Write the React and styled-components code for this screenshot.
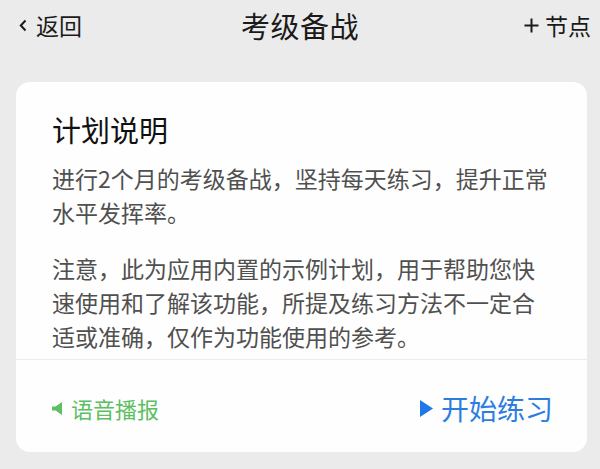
import styled, { createGlobalStyle } from "styled-components";

const GlobalStyle = createGlobalStyle`
    html, body {
        margin: 0;
        padding: 0;
        background-color: #ebebeb;
        font-family: "Noto Sans CJK SC", "Noto Sans", sans-serif;
    }
`;

const Page = styled.div`
    width: 600px;
    height: 469px;
    background-color: #ebebeb;
    overflow: hidden;
`;

const Header = styled.div`
    height: 50px;
    display: grid;
    grid-template-columns: 1fr auto 1fr;
    align-items: center;
    padding: 0 9px;
    color: #1a1a1a;
`;

const BackButton = styled.div`
    display: flex;
    align-items: center;
    gap: 9px;
    padding-left: 10px;
    font-size: 23px;
    line-height: 1;
`;

const Title = styled.div`
    font-size: 29px;
    line-height: 1;
    letter-spacing: 0.5px;
`;

const AddButton = styled.div`
    justify-self: end;
    display: flex;
    align-items: center;
    gap: 6px;
    font-size: 23px;
    line-height: 1;
`;

const Card = styled.div`
    margin: 32px 13px 0 16px;
    background-color: #fefefe;
    border-radius: 14px;
    overflow: hidden;
`;

const CardBody = styled.div`
    padding: 29px 36px 6px 36px;
`;

const CardTitle = styled.h2`
    margin: 0 0 14px;
    font-size: 29px;
    line-height: 36px;
    font-weight: 400;
    color: #111;
`;

const Paragraph = styled.p`
    margin: 0 0 ${(p) => p.gap}px;
    font-size: 23px;
    line-height: 34px;
    color: #505050;
`;

const Footer = styled.div`
    height: 88px;
    border-top: 1px solid #ececec;
    display: flex;
    align-items: center;
    justify-content: space-between;
    padding: 4px 34px 0 36px;
`;

const Action = styled.div`
    display: flex;
    align-items: center;
    gap: ${(p) => p.gap}px;
    color: ${(p) => p.color};
    font-size: ${(p) => p.size}px;
    line-height: 1;
`;

function App() {
    return (
        <Page>
            <GlobalStyle />
            <Header>
                <BackButton>
                    <svg width="8" height="13" viewBox="0 0 8 13">
                        <path
                            d="M6.5 1.5 L1.8 6.5 L6.5 11.5"
                            fill="none"
                            stroke="#1a1a1a"
                            strokeWidth="2"
                        />
                    </svg>
                    返回
                </BackButton>
                <Title>考级备战</Title>
                <AddButton>
                    <svg width="15" height="15" viewBox="0 0 15 15">
                        <path
                            d="M7.5 0.5 V14.5 M0.5 7.5 H14.5"
                            stroke="#1a1a1a"
                            strokeWidth="2"
                        />
                    </svg>
                    节点
                </AddButton>
            </Header>
            <Card>
                <CardBody>
                    <CardTitle>计划说明</CardTitle>
                    <Paragraph gap={22}>
                        进行2个月的考级备战，坚持每天练习，提升正常水平发挥率。
                    </Paragraph>
                    <Paragraph gap={0}>
                        注意，此为应用内置的示例计划，用于帮助您快速使用和了解该功能，所提及练习方法不一定合适或准确，仅作为功能使用的参考。
                    </Paragraph>
                </CardBody>
                <Footer>
                    <Action color="#5cbf62" size={22} gap={9}>
                        <svg width="10" height="13" viewBox="0 0 10 13">
                            <path d="M0 4.5 H3.5 L10 0 V13 L3.5 8.5 H0 Z" fill="#5cbf62" />
                        </svg>
                        语音播报
                    </Action>
                    <Action color="#2b7ee0" size={28} gap={8}>
                        <svg width="13" height="17" viewBox="0 0 13 17">
                            <path d="M0 0 L13 8.5 L0 17 Z" fill="#1f78e8" />
                        </svg>
                        开始练习
                    </Action>
                </Footer>
            </Card>
        </Page>
    );
}

export default App;
